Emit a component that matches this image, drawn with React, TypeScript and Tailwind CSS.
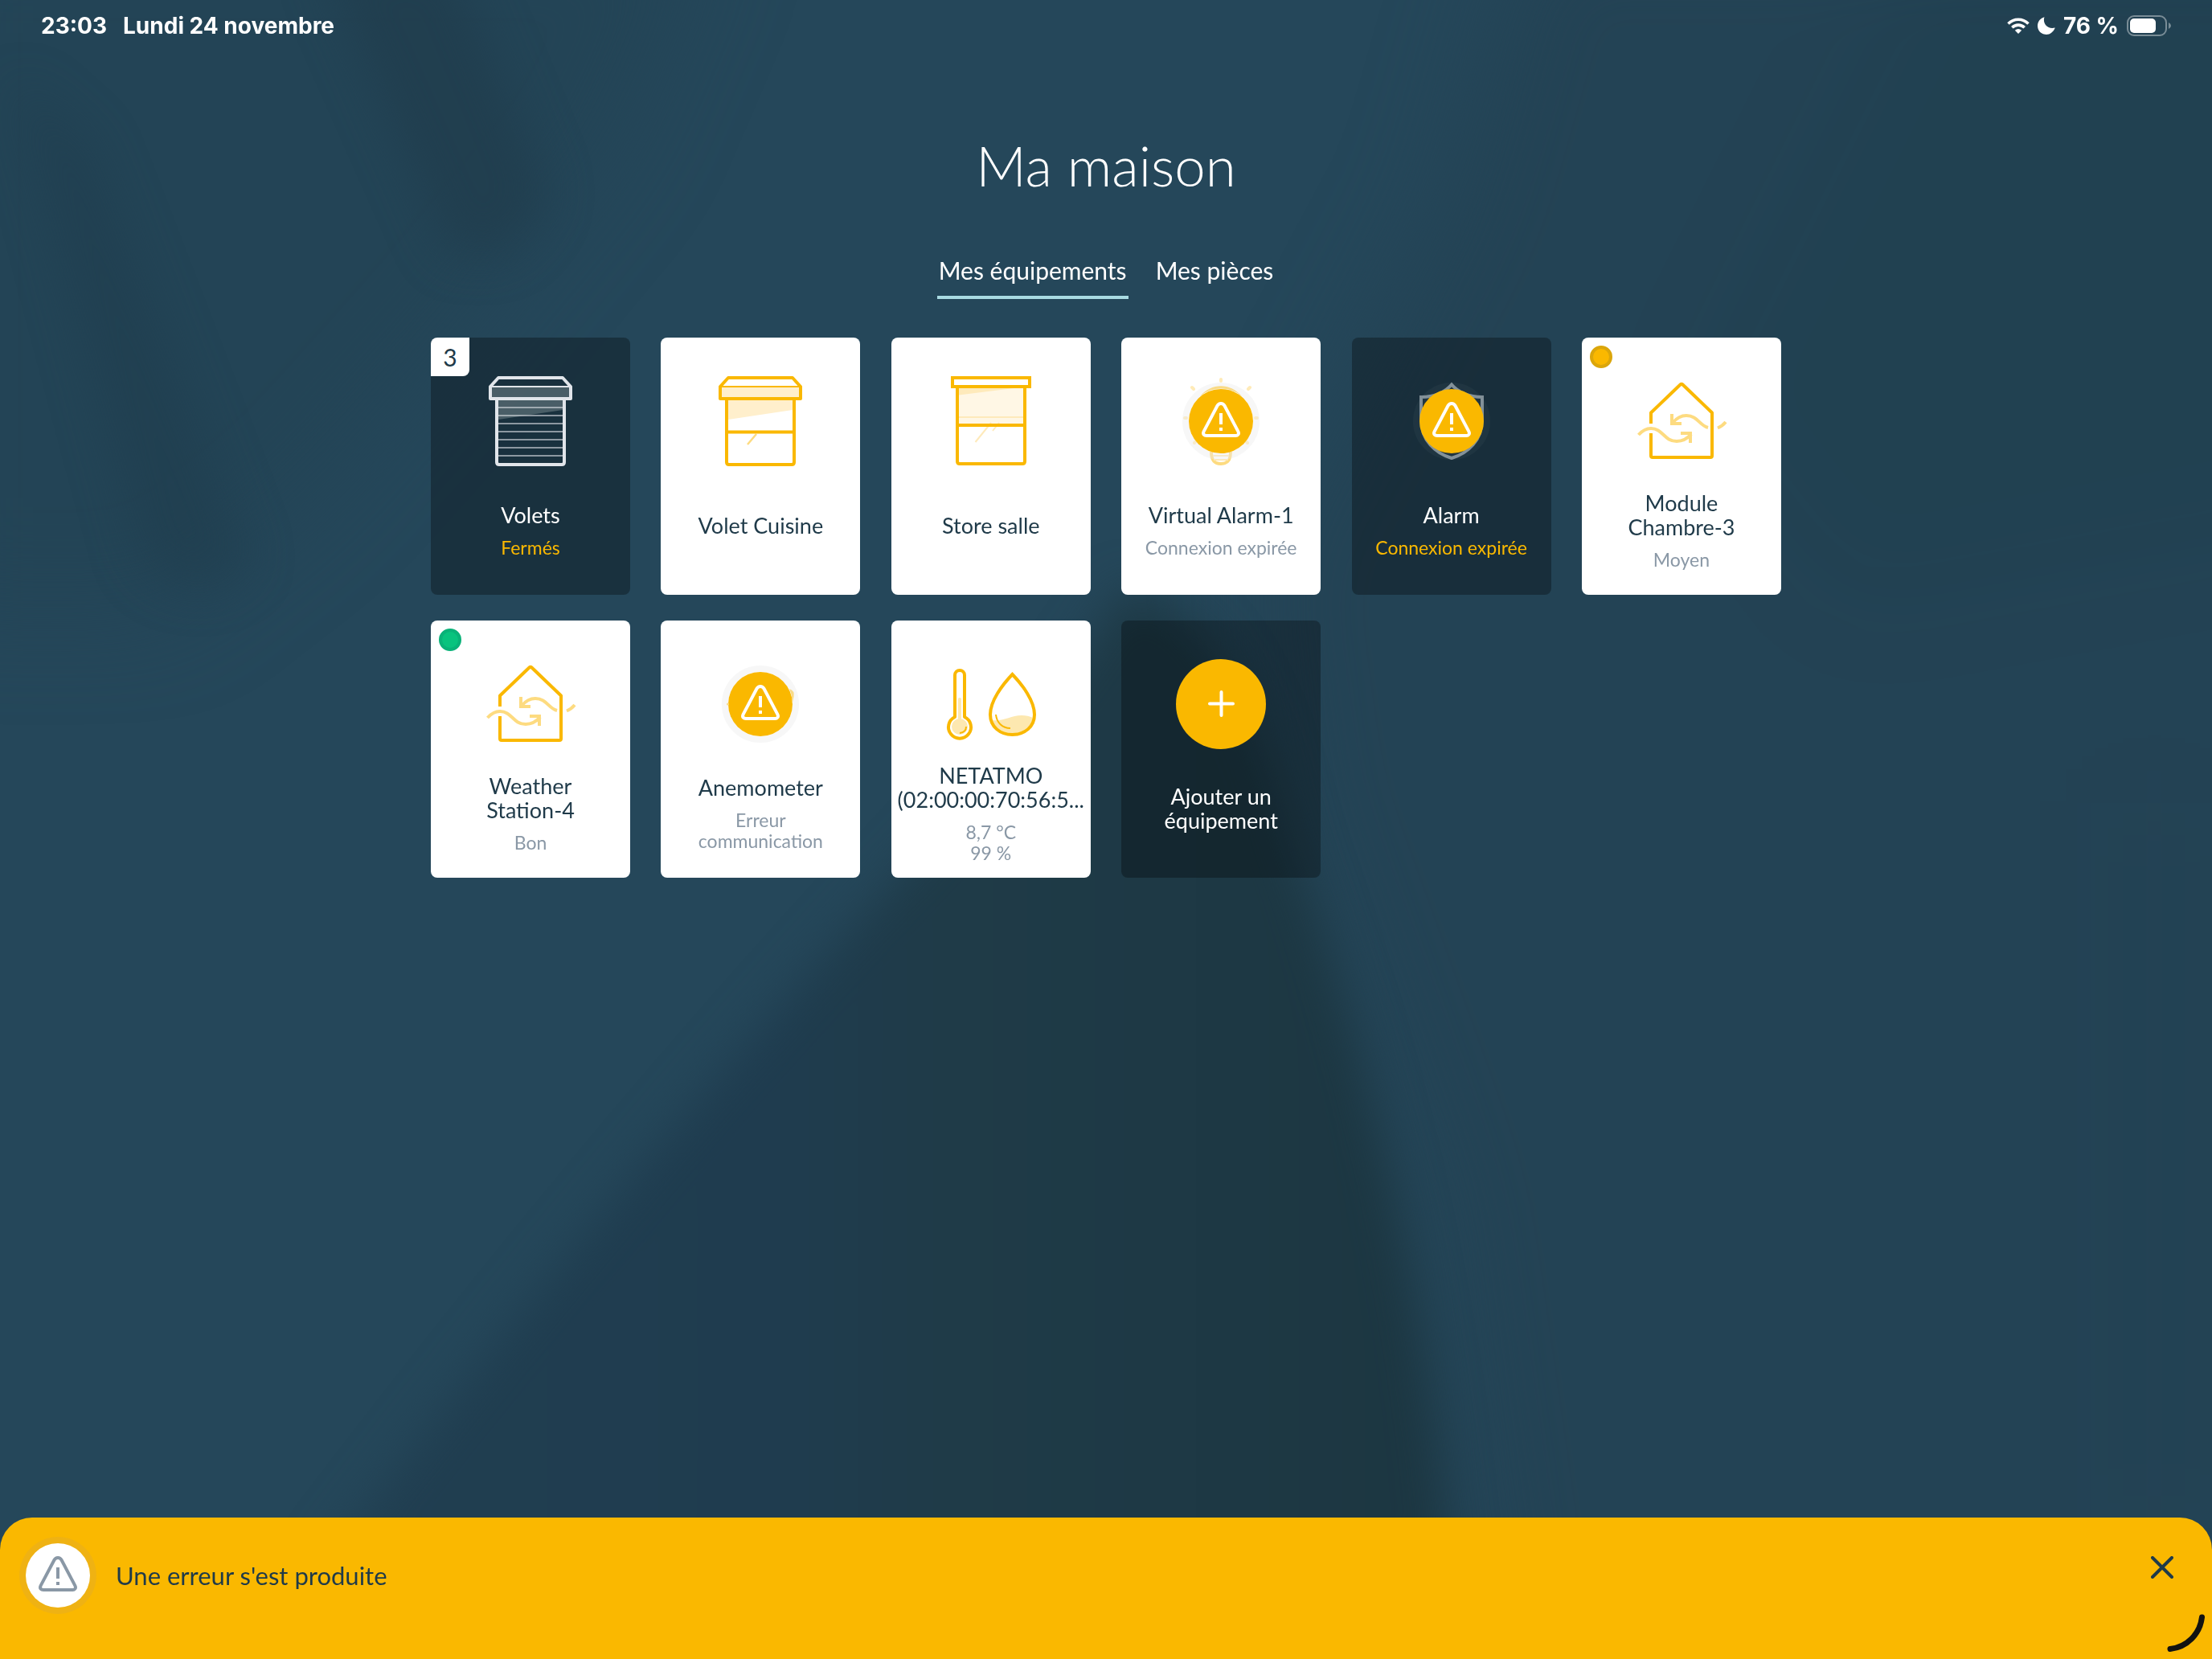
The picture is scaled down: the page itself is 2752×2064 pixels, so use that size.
import React from 'react';
import clsx from 'clsx';

type Tone = 'light' | 'dark';

interface Equipment {
  id: string;
  title: string;
  status?: string;
  tone: Tone;
  icon: React.ReactNode;
  badge?: number;
  dot?: 'amber' | 'green';
}

const YELLOW = '#fab800';
const PALE = '#fddb80';

const Icon = ({ children }: { children: React.ReactNode }) => (
  <svg viewBox="0 0 112 112" className="block size-28 overflow-visible" fill="none" aria-hidden="true">
    {children}
  </svg>
);

const ShutterFrame = ({ color, fill }: { color: string, fill: string }) => (
  <>
    <path d="M16 30H96V42L16 54Z" fill={fill} />
    <path d="M8 14H104V28H8Z" fill={fill} />
    <path d="M7 13H105" stroke={color} strokeWidth="2" />
    <path d="M16 2H96L106 13V28H6V13Z" stroke={color} strokeWidth="4" strokeLinejoin="round" />
    <path d="M14 29V107Q14 110 17 110H95Q98 110 98 107V29" stroke={color} strokeWidth="4" />
  </>
);

const ClosedShutterIcon = () => (
  <Icon>
    {[39, 49, 59, 69, 79, 89, 99].map(y => (
      <path key={y} d={`M16 ${y}H96`} stroke="#8d98a1" strokeWidth="2" />
    ))}
    <ShutterFrame color="#e1e5ea" fill="rgb(214 226 220 / 0.26)" />
  </Icon>
);

const ShutterIcon = () => (
  <Icon>
    <ShutterFrame color={YELLOW} fill="#ffefcc" />
    <path d="M51 72L40 85" stroke={PALE} strokeWidth="2.5" />
    <path d="M14 69.5H98" stroke={YELLOW} strokeWidth="4" />
  </Icon>
);

const BlindIcon = () => (
  <Icon>
    <path d="M16 15H96V60H16Z" fill="#fff7e5" />
    <path d="M16 15H84L16 23.5Z" fill="#feeabb" />
    <path d="M16 51H96M56 58L36.5 82M66 58L58 68" stroke="#feeabb" strokeWidth="2" />
    <path d="M8 2H104V13H8Z" stroke={YELLOW} strokeWidth="4" />
    <path d="M14 14V106Q14 109 17 109H95Q98 109 98 106V14M14 61H98" stroke={YELLOW} strokeWidth="4" />
  </Icon>
);

const WarningSign = ({ color }: { color: string }) => (
  <>
    <path
      d="M51.5 36.8Q53 34 56 34T60.5 36.8L77.3 68.6Q78.6 71 77.4 72.6T74 74H38Q35.8 74 34.6 72.6T34.7 68.6Z"
      stroke={color}
      strokeWidth="4"
      strokeLinejoin="round"
    />
    <path d="M56 46V60M56 64V68" stroke={color} strokeWidth="4" />
  </>
);

const WarningDisc = ({ halo }: { halo: string }) => (
  <>
    <circle cx="56" cy="56" r="44" stroke={halo} strokeWidth="8" />
    <circle cx="56" cy="56" r="40" fill={YELLOW} />
    <WarningSign color="#fff" />
  </>
);

const BulbIcon = () => (
  <Icon>
    <path
      d="M56 4V6M20 14L22 16M92 14L90 16M11 52H13M101 52H99M23 83L24 82M89 83L88 82"
      stroke="#ffebb8"
      strokeWidth="4"
      strokeLinecap="round"
    />
    <path d="M44 94C44 105 48 109 56 109S68 105 68 94" stroke={PALE} strokeWidth="4" />
    <path d="M46 99H66M47 104H65" stroke="#fee8b3" strokeWidth="2" />
    <WarningDisc halo="rgb(235 235 235 / 0.4)" />
    <path d="M30 25C44 8 68 8 82 25A40 40 0 0 0 30 25Z" fill="#f9da86" />
  </Icon>
);

const ShieldIcon = () => (
  <Icon>
    <path
      d="M56 10.5C48 20 34 26 18 26V54C18 80 36 96 56 102C76 96 94 80 94 54V26C78 26 64 20 56 10.5Z"
      stroke="#7f8e96"
      strokeWidth="4"
    />
    <WarningDisc halo="rgb(255 255 255 / 0.03)" />
  </Icon>
);

const AnemometerIcon = () => (
  <Icon>
    <WarningDisc halo="#f7f7f7" />
    <path d="M92 37Q99 39 97.5 47L95.5 56A40 40 0 0 0 92 37Z" fill="#f9da86" />
    <circle cx="15.5" cy="56" r="1.5" fill="#f9da86" />
  </Icon>
);

const AirHouseIcon = () => (
  <Icon>
    <path
      d="M18 59V45.5L54.5 10.5Q56 9 57.5 10.5L94 45.5V99Q94 101 92 101H20Q18 101 18 99V71"
      stroke={YELLOW}
      strokeWidth="4"
      strokeLinejoin="round"
    />
    <g stroke={PALE} strokeWidth="4">
      <path d="M2.5 73C8 67 12 65 18 65C33 65 34 81 50 81C58 81 63 78 68 72" />
      <path d="M55 71H67V83" />
      <path d="M89 64C78 61 76 49 62 49C55 49 50 52 45 58" />
      <path d="M44 47V59H56" />
      <path d="M101 64.5Q107 62 111 57" />
    </g>
  </Icon>
);

const ClimateIcon = () => (
  <Icon>
    <path d="M17 50V80" stroke="#fde8b0" strokeWidth="4" strokeLinecap="round" />
    <circle cx="17" cy="84" r="10" fill="#fde8b0" />
    <path d="M25 84Q25 91 17 92" stroke={YELLOW} strokeWidth="2" />
    <path d="M11 72V20A6 6 0 0 1 23 20V72A14 14 0 1 1 11 72Z" stroke={YELLOW} strokeWidth="4" strokeLinejoin="round" />
    <path d="M57 76C72 78 80 70 94 70Q102 70 108 73C107 84 98 93 82.5 93S58 85 57 76Z" fill="#fde8b0" />
    <path d="M62 69C63 79 70 86 80 86" stroke={YELLOW} strokeWidth="2" />
    <path d="M82.5 19C70 32 55 52 55 69C55 84 67 94 82.5 94S110 84 110 69C110 52 95 32 82.5 19Z" stroke={YELLOW} strokeWidth="4" />
  </Icon>
);

const AddIcon = () => (
  <Icon>
    <circle cx="56" cy="56" r="56" fill={YELLOW} />
    <path d="M42 55.5H71M56.5 41V70" stroke="#fff" strokeWidth="4" strokeLinecap="round" />
  </Icon>
);

const EQUIPMENTS: Equipment[] = [
  { id: 'volets', title: 'Volets', status: 'Fermés', tone: 'dark', icon: <ClosedShutterIcon />, badge: 3 },
  { id: 'cuisine', title: 'Volet Cuisine', tone: 'light', icon: <ShutterIcon /> },
  { id: 'store', title: 'Store salle', tone: 'light', icon: <BlindIcon /> },
  { id: 'virtual-alarm', title: 'Virtual Alarm-1', status: 'Connexion expirée', tone: 'light', icon: <BulbIcon /> },
  { id: 'alarm', title: 'Alarm', status: 'Connexion expirée', tone: 'dark', icon: <ShieldIcon /> },
  { id: 'module', title: 'Module\nChambre-3', status: 'Moyen', tone: 'light', icon: <AirHouseIcon />, dot: 'amber' },
  { id: 'weather', title: 'Weather\nStation-4', status: 'Bon', tone: 'light', icon: <AirHouseIcon />, dot: 'green' },
  { id: 'anemometer', title: 'Anemometer', status: 'Erreur\ncommunication', tone: 'light', icon: <AnemometerIcon /> },
  { id: 'netatmo', title: 'NETATMO\n(02:00:00:70:56:5...', status: '8,7 °C\n99 %', tone: 'light', icon: <ClimateIcon /> },
  { id: 'add', title: 'Ajouter un\néquipement', tone: 'dark', icon: <AddIcon /> },
];

export default function App() {
  const [tab, setTab] = React.useState('equipments');
  const [showError, setShowError] = React.useState(true);

  return (
    <div className="relative isolate flex min-h-screen flex-col overflow-hidden bg-[#25475a] font-['Lato','Noto_Sans',sans-serif] text-white">
      <Backdrop />
      <StatusBar />

      <main className="flex flex-col items-center px-8 pt-[102px]">
        <h1 className="text-[69px] leading-20 font-light">Ma maison</h1>

        <div role="tablist" className="mt-[70px] flex gap-8">
          <Tab label="Mes équipements" active={tab === 'equipments'} onClick={() => setTab('equipments')} />
          <Tab label="Mes pièces" active={tab === 'rooms'} onClick={() => setTab('rooms')} />
        </div>

        <div className="mt-12 grid w-full max-w-[1680px] grid-cols-[repeat(6,248px)] justify-between gap-y-8">
          {EQUIPMENTS.map(item => (
            <EquipmentCard key={item.id} item={item} />
          ))}
        </div>
      </main>

      {showError && <ErrorBanner onClose={() => setShowError(false)} />}

      <svg viewBox="0 0 56 56" className="absolute right-0 bottom-0 size-14" fill="none" aria-hidden="true">
        <path d="M43.5 4C41 25 25 41 4 43.5" stroke="#121212" strokeWidth="7" strokeLinecap="round" />
      </svg>
    </div>
  );
}

const StatusBar = () => (
  <header className="flex h-16 items-center justify-between px-[51px] font-['Inter',sans-serif] text-[28px] font-bold">
    <div className="flex gap-5">
      <span>23:03</span>
      <span>Lundi 24 novembre</span>
    </div>
    <div className="flex items-center gap-2.5">
      <svg viewBox="0 0 28 20" className="h-5 w-7" fill="none" aria-hidden="true">
        <path d="M1.5 7.5C8.5 0.5 19.5 0.5 26.5 7.5M6.3 12.3C10.7 8 17.3 8 21.7 12.3" stroke="#fff" strokeWidth="3.6" />
        <path d="M14 20L9.8 15.8Q14 12.3 18.2 15.8Z" fill="#fff" />
      </svg>
      <svg viewBox="0 0 22 22" className="size-[22px]" aria-hidden="true">
        <path d="M8.5 0.2C6 7.5 11.5 16 21.8 13.5C19.5 19 15.5 22 11 22C5 22 0 17.5 0 11C0 6 3.5 1.5 8.5 0.2Z" fill="#fff" />
      </svg>
      <span>76 %</span>
      <svg viewBox="0 0 55 26" className="h-[26px] w-[55px]" fill="none" aria-hidden="true">
        <rect x="1" y="1" width="48" height="24" rx="8" stroke="#fff" strokeOpacity="0.4" strokeWidth="2" />
        <rect x="4" y="4" width="32" height="18" rx="5" fill="#fff" />
        <path d="M52 9Q55 10.5 55 13T52 17Z" fill="#fff" fillOpacity="0.4" />
      </svg>
    </div>
  </header>
);

interface TabProps {
  label: string;
  active: boolean;
  onClick: () => void;
}

const Tab = ({ label, active, onClick }: TabProps) => (
  <button
    role="tab"
    aria-selected={active}
    onClick={onClick}
    className={clsx('h-14 border-b-4 px-0.5 pb-3 text-[30px] leading-10', active ? 'border-[#a9dbe2]' : 'border-transparent')}
  >
    {label}
  </button>
);

const EquipmentCard = ({ item }: { item: Equipment }) => {
  const dark = item.tone === 'dark';

  return (
    <button className={clsx('relative flex min-h-80 flex-col items-center rounded-lg pt-12', dark ? 'bg-black/30 text-white' : 'bg-white text-[#1f3a49]')}>
      {item.badge && (
        <span className="absolute top-0 left-0 flex size-12 items-center justify-center rounded-tl-lg rounded-br-lg bg-white text-[30px] text-[#1f3a49]">
          {item.badge}
        </span>
      )}
      {item.dot && (
        <span
          className={clsx(
            'absolute top-2.5 left-2.5 size-7 rounded-full border-4',
            item.dot === 'amber' ? 'border-[#dba60b] bg-[#fab800]' : 'border-[#09b278] bg-[#08c37e]'
          )}
        />
      )}
      {item.icon}
      <span className="flex flex-1 flex-col justify-center text-center whitespace-pre-line">
        <span className="mb-3 text-[27px] leading-[30px]">{item.title}</span>
        {item.status && (
          <span className={clsx('text-[23px] leading-[26px]', dark ? 'text-[#fab800]' : 'text-[#8a98a6]')}>{item.status}</span>
        )}
      </span>
    </button>
  );
};

const ErrorBanner = ({ onClose }: { onClose: () => void }) => (
  <div role="alert" className="mt-auto flex h-44 items-start rounded-t-[40px] bg-[#fab800] p-8 text-[#1f3a49]">
    <svg viewBox="16 16 80 80" className="size-20 rounded-full bg-white ring-8 ring-[#efb213]" fill="none" aria-hidden="true">
      <WarningSign color="#8a98a6" />
    </svg>
    <p className="ml-8 flex-1 text-[31px] leading-20">Une erreur s'est produite</p>
    <button onClick={onClose} aria-label="Fermer" className="mt-4 mr-4 size-7">
      <svg viewBox="0 0 28 28" fill="none">
        <path d="M2 2L26 26M26 2L2 26" stroke="#1f3a49" strokeWidth="4" strokeLinecap="round" />
      </svg>
    </button>
  </div>
);

// Out-of-focus shapes behind the whole page
const Backdrop = () => (
  <svg viewBox="0 0 2752 2064" preserveAspectRatio="none" className="absolute inset-0 -z-10 size-full" aria-hidden="true">
    <defs>
      <filter id="soft" x="-30%" y="-30%" width="160%" height="160%" colorInterpolationFilters="sRGB">
        <feGaussianBlur stdDeviation="28" />
      </filter>
      <filter id="softer" x="-50%" y="-50%" width="200%" height="200%" colorInterpolationFilters="sRGB">
        <feGaussianBlur stdDeviation="60" />
      </filter>
      <linearGradient id="cone" x1="0" x2="1" y1="0" y2="0">
        <stop offset="0" stopColor="#213f51" />
        <stop offset="0.4" stopColor="#1f3c4f" />
        <stop offset="0.55" stopColor="#1f3b48" />
        <stop offset="1" stopColor="#1c3641" />
      </linearGradient>
    </defs>
    <g filter="url(#softer)">
      <path d="M-100 -100H880L760 180L560 420L380 620L200 760H-100Z" fill="#234455" opacity="0.8" />
      <path d="M1900 -100H2900V2200H1880L1780 1500L1600 1000L1560 700L1800 250Z" fill="#234354" opacity="0.9" />
      <path d="M2400 -100H2900V650L2300 760L2100 500Z" fill="#213f50" opacity="0.6" />
      <path d="M2640 1000H2720V1900H2640Z" fill="#213f52" opacity="0.5" />
    </g>
    <g filter="url(#soft)">
      <path d="M400 -50H560L680 240Q640 340 560 310Z" fill="#203d4e" opacity="0.8" />
      <path d="M20 100L110 180L310 700Q250 760 180 700Z" fill="#203e4f" opacity="0.6" />
      <path d="M1400 730Q1540 760 1610 1050Q1770 1500 1805 1950H400Q740 1500 1080 1130Q1300 900 1400 730Z" fill="url(#cone)" />
    </g>
  </svg>
);
